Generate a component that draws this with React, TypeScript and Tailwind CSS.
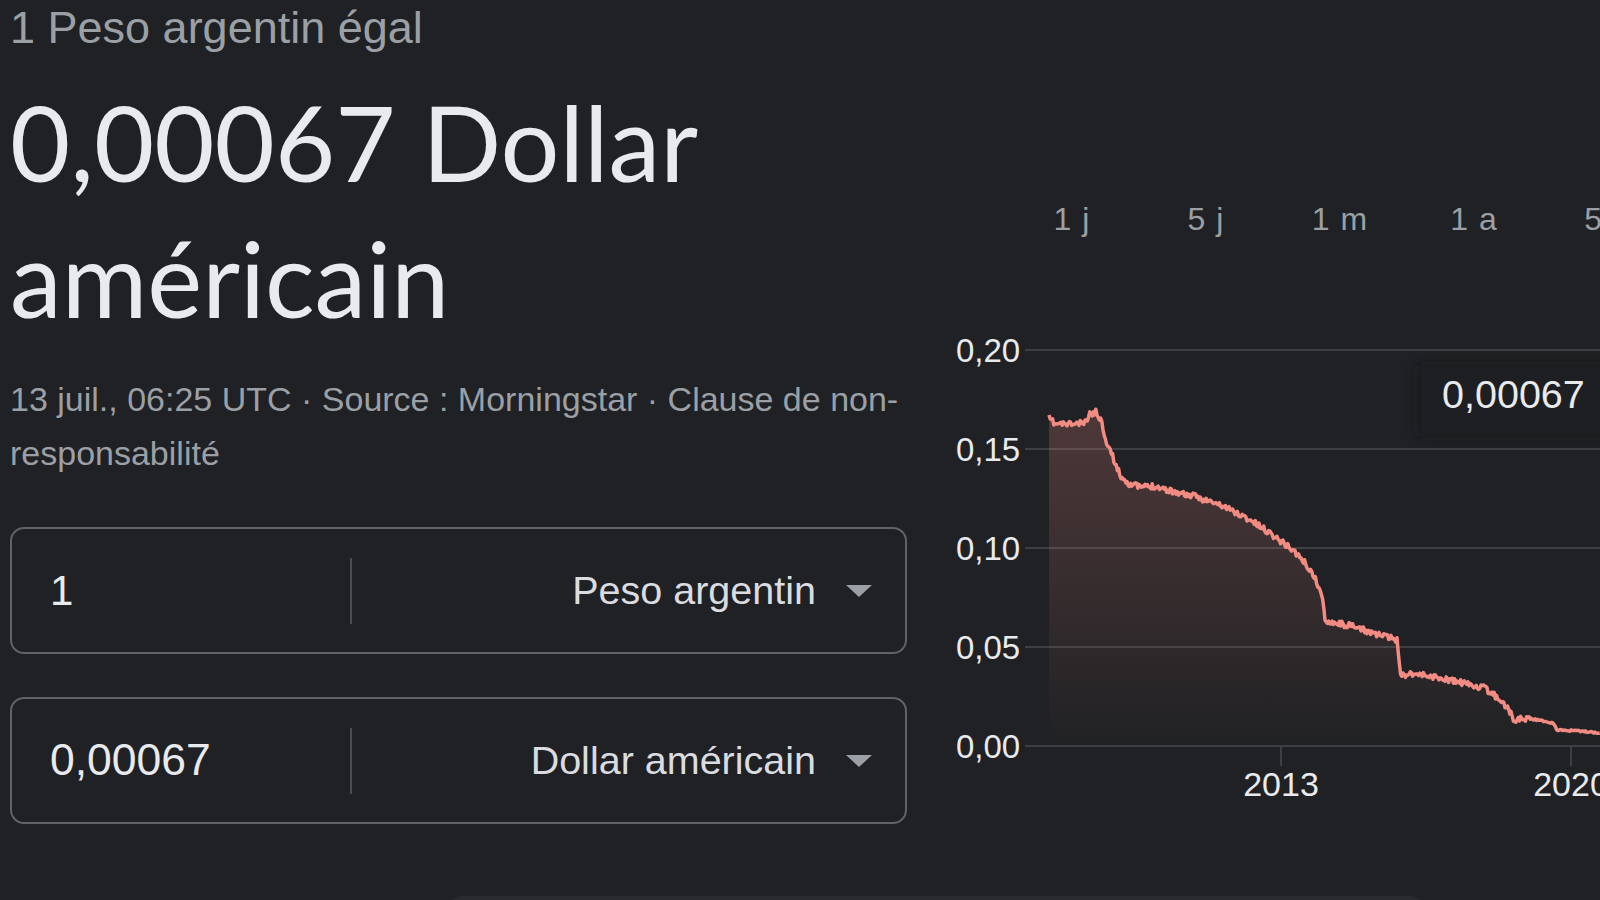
import React from 'react';

const keys: [number, number][] = [
  [1049, 418], [1055, 424], [1075, 424], [1085, 423], [1090, 414], [1096, 412],
  [1101, 420], [1106, 440], [1112, 455], [1120, 475], [1128, 483], [1140, 487],
  [1155, 486], [1175, 492], [1197, 497], [1225, 507], [1250, 520], [1270, 533],
  [1293, 550], [1305, 563], [1315, 578], [1322, 596], [1325, 620], [1354, 627],
  [1380, 635], [1397, 640], [1401, 676], [1410, 673], [1430, 676], [1458, 682],
  [1484, 688], [1501, 700], [1510, 712], [1514, 720], [1527, 718], [1553, 723],
  [1557, 730], [1580, 731], [1600, 733],
];

function buildLine() {
  let seed = 11;
  const rand = () => {
    seed = (seed * 16807) % 2147483647;
    return seed / 2147483647;
  };
  const pts: string[] = [];
  let k = 0;
  for (let x = 1049; x <= 1600; x += 1.2) {
    while (k < keys.length - 2 && keys[k + 1][0] < x) k++;
    const [x0, y0] = keys[k];
    const [x1, y1] = keys[k + 1];
    const t = Math.min(1, Math.max(0, (x - x0) / (x1 - x0)));
    const amp = x > 1530 ? 0.8 : 3;
    const y = y0 + (y1 - y0) * t + (rand() - 0.5) * amp * 2;
    pts.push(`${x.toFixed(1)},${y.toFixed(1)}`);
  }
  return pts;
}

const linePts = buildLine();
const linePath = 'M' + linePts.join(' L');
const areaPath = linePath + ' L1600,746 L1049,746 Z';

const gridY = [
  { y: 350, label: '0,20' },
  { y: 449, label: '0,15' },
  { y: 548, label: '0,10' },
  { y: 647, label: '0,05' },
  { y: 746, label: '0,00' },
];

const tabs = ['1 j', '5 j', '1 m', '1 a', '5 a'];

function Caret() {
  return (
    <svg width="26" height="12" viewBox="0 0 26 12" className="shrink-0">
      <polygon points="0,0 26,0 13,12" fill="#9aa0a6" />
    </svg>
  );
}

function ConvertRow({ value, currency, big }: { value: string; currency: string; big?: boolean }) {
  return (
    <div className="flex h-[127px] w-[897px] items-center rounded-[14px] border-2 border-[#5f6368]">
      <div className={`w-[338px] pl-[38px] text-[#e8eaed] ${big ? 'text-[44.5px]' : 'text-[42px]'}`}>
        {value}
      </div>
      <div className="h-[66px] w-[2px] bg-[#4a4d51]" />
      <div className="flex flex-1 items-center justify-end gap-[30px] pr-[33px]">
        <span className="text-[39.5px] text-[#dadce0]">{currency}</span>
        <Caret />
      </div>
    </div>
  );
}

export default function App() {
  return (
    <div className="h-[900px] w-[1600px] overflow-hidden bg-[#202124] font-['Liberation_Sans',Arial,sans-serif]">
      <div className="flex">
        <div className="w-[907px] shrink-0 pl-[10px]">
          <div className="mt-[2px] text-[45px] leading-[52px] text-[#9aa0a6]">1 Peso argentin égal</div>
          <div className="mt-[20px] font-['Lato',sans-serif] text-[104px] leading-[136px] text-[#e8eaed]">
            0,00067 Dollar américain
          </div>
          <div className="mt-[26px] text-[34px] leading-[54px] text-[#9aa0a6]">
            13 juil., 06:25 UTC · Source : Morningstar · Clause de non-responsabilité
          </div>
          <div className="mt-[47px] flex flex-col gap-[43px]">
            <ConvertRow value="1" currency="Peso argentin" />
            <ConvertRow value="0,00067" currency="Dollar américain" big />
          </div>
        </div>

        <div className="flex flex-1 flex-col">
          <div className="mt-[196px] flex h-[46px] pl-[98px] text-[32px] leading-[46px] tracking-[1px] text-[#9aa0a6]">
            {tabs.map((t) => (
              <div key={t} className="w-[134px] shrink-0 text-center">
                {t}
              </div>
            ))}
          </div>
          <svg width="693" height="500" viewBox="907 320 693 500" className="mt-[78px] block overflow-visible">
            <defs>
              <linearGradient id="area" x1="0" y1="410" x2="0" y2="746" gradientUnits="userSpaceOnUse">
                <stop offset="0" stopColor="#f28b82" stopOpacity="0.22" />
                <stop offset="0.75" stopColor="#f28b82" stopOpacity="0.06" />
                <stop offset="1" stopColor="#f28b82" stopOpacity="0" />
              </linearGradient>
              <filter id="sh" x="-20%" y="-40%" width="140%" height="180%">
                <feGaussianBlur stdDeviation="6" />
              </filter>
            </defs>
            {gridY.map((g) => (
              <g key={g.label}>
                <line x1="1025" x2="1600" y1={g.y} y2={g.y} stroke="#3c4043" strokeWidth="2" />
                <text x="956" y={g.y + 12} fill="#e8eaed" fontSize="33" fontFamily="Liberation Sans, Arial, sans-serif">
                  {g.label}
                </text>
              </g>
            ))}
            <line x1="1281" x2="1281" y1="746" y2="766" stroke="#3c4043" strokeWidth="2" />
            <line x1="1571" x2="1571" y1="746" y2="766" stroke="#3c4043" strokeWidth="2" />
            <text x="1281" y="796" textAnchor="middle" fill="#e8eaed" fontSize="34" fontFamily="Liberation Sans, Arial, sans-serif">
              2013
            </text>
            <text x="1571" y="796" textAnchor="middle" fill="#e8eaed" fontSize="34" fontFamily="Liberation Sans, Arial, sans-serif">
              2020
            </text>
            <path d={areaPath} fill="url(#area)" />
            <path d={linePath} fill="none" stroke="#f28b82" strokeWidth="3.5" strokeLinejoin="round" />
            <rect x="1418" y="366" width="200" height="70" rx="4" fill="#17181a" opacity="0.7" filter="url(#sh)" />
            <rect x="1421" y="367" width="190" height="67" rx="4" fill="#1e1f22" />
            <text x="1442" y="408" fill="#e8eaed" fontSize="39.5" fontFamily="Liberation Sans, Arial, sans-serif">
              0,00067
            </text>
          </svg>
        </div>
      </div>
      <div className="ml-[449px] mt-[72px] h-[20px] w-[974px] rounded-t-[12px] bg-[#2a2b2f]" />
    </div>
  );
}
